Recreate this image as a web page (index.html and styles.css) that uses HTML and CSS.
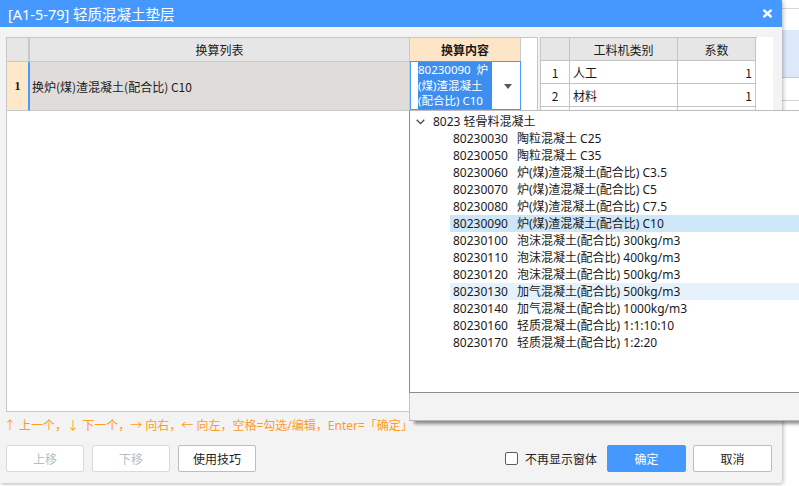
FILE: index.html
```html
<!DOCTYPE html>
<html lang="zh-CN">
<head>
<meta charset="utf-8">
<title>[A1-5-79] 轻质混凝土垫层</title>
<link rel="stylesheet" href="styles.css">
</head>
<body>
<div class="desk">
  <div class="dialog">
    <div class="titlebar">
      <span class="title">[A1-5-79] 轻质混凝土垫层</span>
      <svg class="close" width="11" height="9" viewBox="0 0 11 9"><path d="M1.5 0.8 L9.5 8.2 M9.5 0.8 L1.5 8.2" stroke="#fff" stroke-width="2.4" fill="none"/></svg>
    </div>
    <div class="content">
      <div class="panes">
        <div class="pane-left">
          <div class="lrow lhead">
            <div class="c-rn hrn"></div>
            <div class="c-list hcell sim">换算列表</div>
            <div class="c-cont hcont sim">换算内容</div>
          </div>
          <div class="lrow lbody">
            <div class="c-rn brn">1</div>
            <div class="c-list bcell sim">换炉(煤)渣混凝土(配合比) C10</div>
            <div class="c-cont editor">
              <div class="sel"><span class="ln">80230090 &nbsp;炉</span><span class="ln">(煤)渣混凝土</span><span class="ln">(配合比) C10</span></div>
              <svg class="caret" width="8" height="5" viewBox="0 0 8 5"><path d="M0 0 H8 L4 5 Z" fill="#5a5a5a"/></svg>
            </div>
          </div>
        </div>
        <div class="pane-right">
          <div class="rtable">
            <div class="rrow rhead">
              <div class="r-rn"></div>
              <div class="r-kind sim">工料机类别</div>
              <div class="r-coef sim">系数</div>
            </div>
            <div class="rrow">
              <div class="r-rn sim">1</div>
              <div class="r-kind left sim">人工</div>
              <div class="r-coef right sim">1</div>
            </div>
            <div class="rrow">
              <div class="r-rn sim">2</div>
              <div class="r-kind left sim">材料</div>
              <div class="r-coef right sim">1</div>
            </div>
            <div class="rrow">
              <div class="r-rn sim">3</div>
              <div class="r-kind left sim">机械</div>
              <div class="r-coef right sim">1</div>
            </div>
          </div>
        </div>
      </div>
      <div class="hint">↑ 上一个，↓ 下一个，→ 向右，← 向左，空格=勾选/编辑，Enter=「确定」</div>
      <div class="footer">
        <div class="btns">
          <button class="btn disabled">上移</button>
          <button class="btn disabled">下移</button>
          <button class="btn">使用技巧</button>
        </div>
        <div class="btns right-group">
          <label class="check"><span class="box"></span>不再显示窗体</label>
          <button class="btn primary">确定</button>
          <button class="btn">取消</button>
        </div>
      </div>
    </div>
    <div class="popup">
      <div class="plist">
        <div class="prow root">
          <svg class="chev" width="9" height="6" viewBox="0 0 9 6"><path d="M0.7 0.8 L4.5 4.6 L8.3 0.8" stroke="#444" stroke-width="1.3" fill="none"/></svg>
          <span>8023 轻骨料混凝土</span>
        </div>
        <div class="prow item"><span class="code">80230030</span>陶粒混凝土 C25</div>
        <div class="prow item"><span class="code">80230050</span>陶粒混凝土 C35</div>
        <div class="prow item"><span class="code">80230060</span>炉(煤)渣混凝土(配合比) C3.5</div>
        <div class="prow item"><span class="code">80230070</span>炉(煤)渣混凝土(配合比) C5</div>
        <div class="prow item"><span class="code">80230080</span>炉(煤)渣混凝土(配合比) C7.5</div>
        <div class="prow item selected"><span class="code">80230090</span>炉(煤)渣混凝土(配合比) C10</div>
        <div class="prow item"><span class="code">80230100</span>泡沫混凝土(配合比) 300kg/m3</div>
        <div class="prow item"><span class="code">80230110</span>泡沫混凝土(配合比) 400kg/m3</div>
        <div class="prow item"><span class="code">80230120</span>泡沫混凝土(配合比) 500kg/m3</div>
        <div class="prow item hover"><span class="code">80230130</span>加气混凝土(配合比) 500kg/m3</div>
        <div class="prow item"><span class="code">80230140</span>加气混凝土(配合比) 1000kg/m3</div>
        <div class="prow item"><span class="code">80230160</span>轻质混凝土(配合比) 1:1:10:10</div>
        <div class="prow item"><span class="code">80230170</span>轻质混凝土(配合比) 1:2:20</div>
      </div>
      <div class="pfoot"></div>
    </div>
  </div>
  <div class="behind">
    <div class="b1"></div>
    <div class="b2"></div>
    <div class="b3"></div>
    <div class="b4"></div>
    <div class="b5"></div>
  </div>
</div>
</body>
</html>
```

FILE: styles.css
```css
html, body {
  margin: 0;
  padding: 0;
}
body {
  width: 799px;
  height: 486px;
  overflow: hidden;
  background: #ffffff;
  font-family: "Noto Sans", "Noto Sans CJK SC", sans-serif;
  font-size: 12px;
  color: #1a1a1a;
}
.desk {
  display: flex;
  height: 486px;
}
.dialog {
  position: relative;
  z-index: 1;
  width: 782px;
  height: 483px;
  flex: none;
  background: #f3f3f3;
  box-shadow: 1px 1px 4px rgba(0, 0, 0, 0.3);
  border-bottom-right-radius: 3px;
  display: flex;
  flex-direction: column;
}
.titlebar {
  height: 27px;
  background: #4599fe;
  display: flex;
  align-items: center;
  justify-content: space-between;
  padding: 0 9px 0 8px;
}
.title {
  color: #ffffff;
  font-size: 14.5px;
  line-height: 16px;
  margin-top: 1px;
}
.close {
  display: block;
  margin-top: -1px;
}
.content {
  flex: 1;
  display: flex;
  flex-direction: column;
  padding: 10px 0 0 0;
}
.sim {
  font-family: "Noto Sans CJK SC", sans-serif;
  font-size: 12px;
}
.panes {
  display: flex;
  gap: 2px;
  margin-left: 6px;
  height: 375px;
}
.pane-left {
  width: 532px;
  box-sizing: border-box;
  border: 1px solid #c6c6c6;
  background: #ffffff;
}
.lrow {
  display: flex;
}
.lhead {
  height: 24px;
}
.c-rn {
  width: 21px;
  flex: none;
}
.hrn {
  background: #e6e6e6;
  border-right: 2px solid #c8c8c8;
  border-bottom: 1px solid #c8c8c8;
}
.c-list {
  width: 380px;
  flex: none;
  box-sizing: border-box;
  border-right: 1px solid #c8c8c8;
}
.c-cont {
  width: 111px;
  flex: none;
  box-sizing: border-box;
}
.hcell {
  background: #e6e6e6;
  border-bottom: 1px solid #c8c8c8;
  display: flex;
  align-items: center;
  justify-content: center;
}
.hcont {
  background: #fde6c8;
  border-right: 1px solid #c8c8c8;
  border-bottom: 1px solid #c8c8c8;
  font-weight: bold;
  display: flex;
  align-items: center;
  justify-content: center;
}
.lbody {
  height: 49px;
}
.brn {
  background: #fee8c9;
  border-right: 2px solid #4a9bff;
  border-bottom: 1px solid #c8c8c8;
  font-family: "Liberation Serif", serif;
  font-weight: bold;
  font-size: 12px;
  display: flex;
  align-items: center;
  justify-content: center;
}
.bcell {
  background: #e0dcd9;
  border-bottom: 1px solid #c8c8c8;
  display: flex;
  align-items: center;
  padding-left: 2px;
}
.editor {
  background: #ffffff;
  border: 1px solid #4a9bff;
  margin-top: -1px;
  height: 49px;
  display: flex;
  align-items: center;
  padding-left: 7px;
}
.sel {
  display: flex;
  flex-direction: column;
  width: 74px;
  background: #3d8eef;
  color: #ffffff;
  font-family: "Noto Sans", "Noto Sans CJK SC", sans-serif;
  font-size: 11.5px;
}
.ln {
  display: block;
  height: 15.66px;
  line-height: 15.66px;
  white-space: nowrap;
}
.caret {
  margin-left: 12px;
  margin-top: 2px;
}
.pane-right {
  width: 233px;
  background: #ffffff;
}
.rtable {
  width: 216px;
  border-top: 1px solid #c4c4c4;
  border-left: 1px solid #c4c4c4;
}
.rrow {
  display: flex;
  height: 23px;
}
.rrow > div {
  box-sizing: border-box;
  border-right: 1px solid #c4c4c4;
  border-bottom: 1px solid #c4c4c4;
  display: flex;
  align-items: center;
  justify-content: center;
}
.rhead > div {
  background: #e6e6e6;
}
.r-rn {
  width: 29px;
}
.r-kind {
  width: 108px;
}
.r-coef {
  width: 78px;
}
.rrow > .left {
  justify-content: flex-start;
  padding-left: 3px;
}
.rrow > .right {
  justify-content: flex-end;
  padding-right: 3px;
}
.hint {
  margin-top: 7px;
  height: 14px;
  line-height: 14px;
  padding-left: 4px;
  color: #ff9c1c;
  font-size: 12px;
  white-space: nowrap;
}
.footer {
  margin-top: 12px;
  display: flex;
  justify-content: space-between;
  padding: 0 10px 0 6px;
}
.btns {
  display: flex;
  gap: 8px;
  align-items: center;
}
.right-group {
  gap: 7px;
}
.btn {
  width: 78px;
  height: 27px;
  box-sizing: border-box;
  border: 1px solid #bdbdbd;
  border-radius: 2px;
  background: #ffffff;
  font-family: "Noto Sans", "Noto Sans CJK SC", sans-serif;
  font-size: 12px;
  color: #222222;
  padding: 0;
}
.right-group .btn {
  width: 79px;
}
.btn.disabled {
  border-color: #dadada;
  color: #bcbcbc;
}
.btn.primary {
  background: #4599fe;
  border-color: #4599fe;
  color: #ffffff;
}
.check {
  display: flex;
  align-items: center;
  gap: 7px;
  margin-right: 3px;
  color: #222222;
}
.box {
  width: 13px;
  height: 13px;
  box-sizing: border-box;
  border: 1px solid #5c5c5c;
  border-radius: 2px;
  background: #ffffff;
}
.popup {
  position: absolute;
  left: 409px;
  top: 110px;
  width: 392px;
  height: 311px;
  box-shadow: 5px 3px 3px rgba(0, 0, 0, 0.42);
  display: flex;
  flex-direction: column;
}
.plist {
  height: 283px;
  box-sizing: border-box;
  background: #ffffff;
  border-top: 1px solid #bdbdbd;
  border-left: 1px solid #8c8c8c;
  border-bottom: 1px solid #8c8c8c;
  padding-top: 2px;
}
.prow {
  height: 17px;
  line-height: 17px;
  white-space: nowrap;
  display: flex;
  align-items: center;
}
.root {
  padding-left: 6px;
}
.chev {
  margin-right: 8px;
  margin-top: 1px;
}
.item {
  margin-left: 40px;
  padding-left: 3px;
}
.code {
  display: inline-block;
  width: 64px;
}
.selected {
  background: #cde6f8;
}
.hover {
  background: #e5f2fc;
}
.pfoot {
  flex: 1;
  background: #f3f3f3;
  border-left: 1px solid #c4c4c4;
  border-bottom: 1px solid #b8b8b8;
}
.behind {
  flex: 1;
  display: flex;
  flex-direction: column;
  background: #ffffff;
}
.b1 {
  height: 8px;
  border-bottom: 1px solid #d6d6d6;
}
.b2 {
  height: 21px;
}
.b3 {
  height: 47px;
  background: #dde8f8;
  border-bottom: 1px solid #c8c8c8;
}
.b4 {
  height: 22px;
  border-bottom: 1px solid #d4d4d4;
}
.b5 {
  flex: 1;
}
```
